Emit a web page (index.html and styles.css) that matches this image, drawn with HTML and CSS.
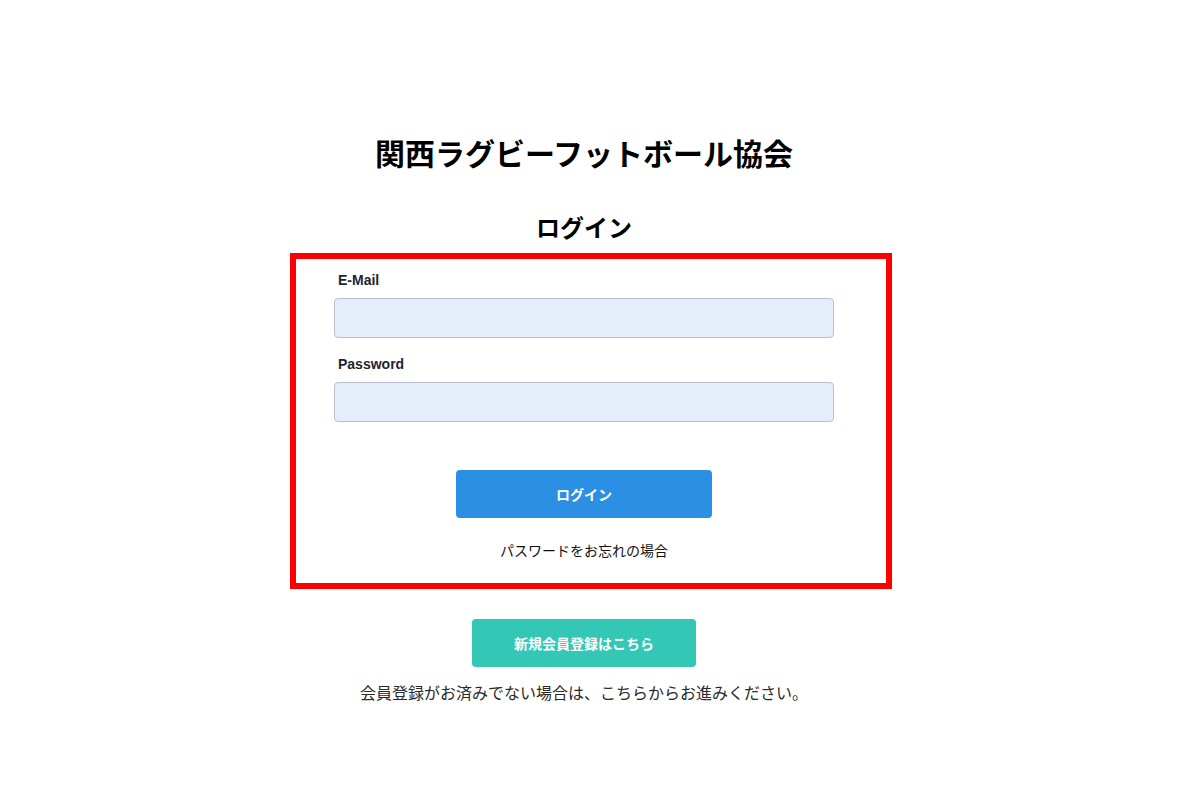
FILE: index.html
```html
<!DOCTYPE html>
<html lang="ja">
<head>
<meta charset="utf-8">
<title>関西ラグビーフットボール協会 ログイン</title>
<link rel="stylesheet" href="styles.css">
</head>
<body>
<main class="page">
  <h1 class="site-title">関西ラグビーフットボール協会</h1>
  <h2 class="login-title">ログイン</h2>
  <section class="login-box">
    <form class="login-form">
      <label class="field-label" for="email">E-Mail</label>
      <input class="field-input" id="email" type="email">
      <label class="field-label second" for="password">Password</label>
      <input class="field-input" id="password" type="password">
      <div class="actions">
        <button type="button" class="btn btn-login">ログイン</button>
        <a class="forgot" href="#">パスワードをお忘れの場合</a>
      </div>
    </form>
  </section>
  <a class="btn btn-register" href="#">新規会員登録はこちら</a>
  <p class="register-note">会員登録がお済みでない場合は、こちらからお進みください。</p>
</main>
</body>
</html>
```

FILE: styles.css
```css
* { box-sizing: border-box; }
html, body { margin: 0; padding: 0; background: #fff; }
body {
  font-family: "Liberation Sans", "Noto Sans CJK JP", sans-serif;
  color: #111;
}
.page {
  display: flex;
  flex-direction: column;
  align-items: center;
  padding: 137px 32px 0 0;
}
.site-title {
  margin: 0;
  font-size: 30px;
  line-height: 36px;
  font-weight: 700;
  color: #000;
}
.login-title {
  margin: 40px 0 0;
  font-size: 24px;
  line-height: 32px;
  font-weight: 700;
  color: #000;
}
.login-box {
  margin: 8px 0 0 14px;
  width: 602px;
  height: 336px;
  border: 6px solid #ff0000;
  padding: 11px 0 0 38px;
}
.login-form {
  width: 500px;
  display: flex;
  flex-direction: column;
}
.field-label {
  font-size: 14px;
  line-height: 20px;
  font-weight: 700;
  color: #1f2430;
  margin: 0 0 8px 4px;
}
.field-label.second { margin-top: 16px; }
.field-input {
  width: 500px;
  height: 40px;
  border: 1px solid #b9c1ce;
  border-radius: 4px;
  background: #e5ecfa;
  font-size: 14px;
  padding: 0 12px;
  margin: 0;
}
.actions {
  display: flex;
  flex-direction: column;
  align-items: center;
  margin-top: 48px;
}
.btn {
  display: flex;
  align-items: center;
  justify-content: center;
  height: 48px;
  border: 0;
  border-radius: 4px;
  color: #fff;
  font-family: "Liberation Sans", "Noto Sans CJK JP", sans-serif;
  font-size: 14px;
  font-weight: 700;
  text-decoration: none;
}
.btn-login {
  width: 256px;
  background: #2b90e3;
}
.forgot {
  margin-top: 23px;
  font-size: 14px;
  line-height: 20px;
  color: #111;
  text-decoration: none;
}
.btn-register {
  margin-top: 30px;
  width: 224px;
  background: #33c7b5;
}
.register-note {
  margin: 15px 0 0;
  font-size: 16px;
  line-height: 24px;
  color: #2a2a2a;
}
```
